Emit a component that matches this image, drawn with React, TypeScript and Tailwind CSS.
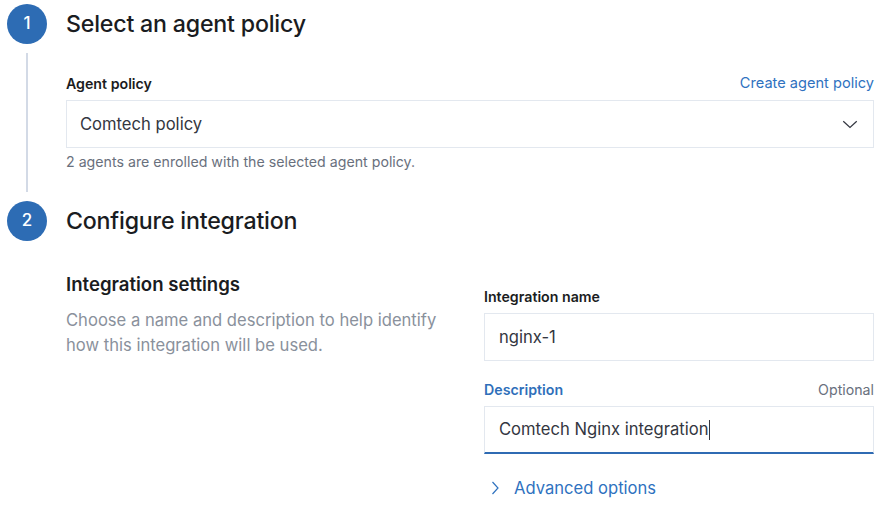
import React from "react";

const font = { fontFamily: "Inter, 'Noto Sans', sans-serif" };

function Circle({ n }: { n: string }) {
  return (
    <div className="w-10 h-10 rounded-full bg-[#2d6cb4] text-white flex items-center justify-center text-[17px] font-medium shrink-0">
      {n}
    </div>
  );
}

export default function App() {
  return (
    <div style={font} className="w-[890px] h-[516px] bg-white pl-[7px] pt-[4px] text-[#1a1c21] overflow-hidden">
      {/* Step 1 */}
      <div className="flex items-center gap-[19px] h-10">
        <Circle n="1" />
        <h2 className="text-[23.2px] font-medium tracking-[-0.2px]">Select an agent policy</h2>
      </div>
      <div className="ml-[19px] my-[9px] border-l-2 border-[#d3dae6] pl-[38px] pt-[21px] pb-[22px] w-[848px]">
        <div className="flex justify-between items-center h-5">
          <span className="text-[14.2px] font-semibold">Agent policy</span>
          <span className="text-[14.6px] text-[#2f72bf]">Create agent policy</span>
        </div>
        <div className="mt-[6px] h-12 border border-[#e3e8ef] bg-white flex items-center justify-between pl-[13px] pr-[14px]">
          <span className="text-[16.6px] text-[#343741]">Comtech policy</span>
          <svg width="18" height="18" viewBox="0 0 16 16" fill="none" stroke="#343741" strokeWidth="1.1">
            <path d="M2 5.5 L8 11 L14 5.5" />
          </svg>
        </div>
        <div className="mt-[6px] text-[14.2px] leading-4 text-[#69707d]">
          2 agents are enrolled with the selected agent policy.
        </div>
      </div>

      {/* Step 2 */}
      <div className="flex items-center gap-[19px] h-10">
        <Circle n="2" />
        <h2 className="text-[23.2px] font-medium tracking-[-0.2px]">Configure integration</h2>
      </div>
      <div className="pl-[59px] w-[867px] flex justify-between">
        <div className="pt-[31px] w-[390px]">
          <h3 className="text-[18.6px] font-semibold leading-6">Integration settings</h3>
          <p className="mt-[12px] text-[16.6px] leading-[25px] text-[#8a919c]">
            Choose a name and description to help identify how this integration will be used.
          </p>
        </div>
        <div className="pt-[46px] w-[390px]">
          <div className="h-5 flex items-center">
            <span className="text-[14.2px] font-semibold">Integration name</span>
          </div>
          <div className="mt-[6px] h-12 border border-[#e3e8ef] bg-white flex items-center pl-[14px]">
            <span className="text-[16.6px] text-[#343741]">nginx-1</span>
          </div>
          <div className="mt-[19px] h-5 flex items-center justify-between">
            <span className="text-[14.2px] font-semibold text-[#2f6fba]">Description</span>
            <span className="text-[14.2px] text-[#69707d]">Optional</span>
          </div>
          <div className="mt-[6px] h-12 border border-[#e3e8ef] border-b-2 border-b-[#2f6bb3] bg-white flex items-center pl-[14px]">
            <span className="text-[16.6px] text-[#343741]">Comtech Nginx integration</span>
            <span className="w-px h-5 bg-[#343741] ml-px" />
          </div>
          <div className="mt-[22px] flex items-center h-6 text-[#2f72bf]">
            <svg width="16" height="16" viewBox="0 0 16 16" fill="none" stroke="#2f72bf" strokeWidth="1.2" className="ml-[3px]">
              <path d="M5.5 2 L11 8 L5.5 14" />
            </svg>
            <span className="ml-[11px] text-[16.6px]">Advanced options</span>
          </div>
        </div>
      </div>
    </div>
  );
}
